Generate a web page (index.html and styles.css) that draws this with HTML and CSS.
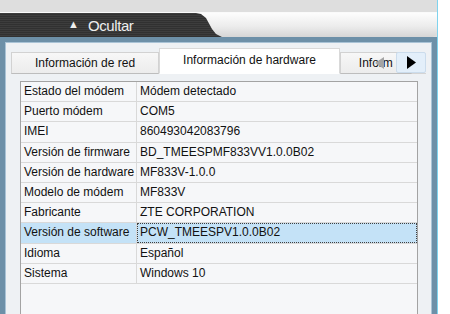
FILE: index.html
```html
<!DOCTYPE html>
<html lang="es">

<head>
    <meta charset="UTF-8">
    <meta name="viewport" content="width=device-width, initial-scale=1.0">
    <title>Información de hardware</title>
    <link rel="stylesheet" href="styles.css">
</head>

<body>
    <div class='app'>
        <div class='topbar'>
            <div class='bar'>
                <div class='hide-tab'>
                    <span class='arrow'>&#9650;</span>
                    <span class='hide-text'>Ocultar</span>
                </div>
            </div>
        </div>
        <div class='frame'>
            <div class='tabs'>
                <div class='tab'>Información de red</div>
                <div class='tab active'>Información de hardware</div>
                <div class='tab cut'>Inform
                    <svg class='scroll-left' width='9' height='12' viewBox='0 0 9 12'>
                        <path d='M9 0 L0 6 L9 12 Z' fill='#a4a4a4'/>
                    </svg>
                </div>
                <div class='scroll-right'>
                    <svg width='9' height='13' viewBox='0 0 9 13'>
                        <path d='M0 0 L9 6.5 L0 13 Z' fill='#000000'/>
                    </svg>
                </div>
            </div>
            <div class='page'>
                <div class='grid'>
                    <div class='row'><div class='key'>Estado del módem</div><div class='val'>Módem detectado</div></div>
                    <div class='row'><div class='key'>Puerto módem</div><div class='val'>COM5</div></div>
                    <div class='row'><div class='key'>IMEI</div><div class='val'>860493042083796</div></div>
                    <div class='row'><div class='key'>Versión de firmware</div><div class='val'>BD_TMEESPMF833VV1.0.0B02</div></div>
                    <div class='row'><div class='key'>Versión de hardware</div><div class='val'>MF833V-1.0.0</div></div>
                    <div class='row'><div class='key'>Modelo de módem</div><div class='val'>MF833V</div></div>
                    <div class='row'><div class='key'>Fabricante</div><div class='val'>ZTE CORPORATION</div></div>
                    <div class='row selected'><div class='key'>Versión de software</div><div class='val'>PCW_TMEESPV1.0.0B02</div></div>
                    <div class='row'><div class='key'>Idioma</div><div class='val'>Español</div></div>
                    <div class='row'><div class='key'>Sistema</div><div class='val'>Windows 10</div></div>
                </div>
            </div>
        </div>
    </div>
</body>

</html>
```

FILE: styles.css
```css
body {
    margin: 0px;
    background-color: #ffffff;
    font-family: "Liberation Sans", Arial, sans-serif;
    overflow: hidden;
}

.app {
    width: 437px;
    height: 314px;
    display: flex;
    flex-direction: column;
    border-right: 1px solid #7fd3ee;
}

.topbar {
    height: 37px;
    padding-top: 12px;
    box-sizing: border-box;
    background-color: #dedede;
}

.bar {
    height: 25px;
    border-top: 1px solid #fafafa;
    box-sizing: border-box;
    border-bottom-right-radius: 5px;
    background: linear-gradient(#fdfdfd, #ececec 55%, #d6d6d6);
}

.hide-tab {
    width: 222px;
    height: 24px;
    display: flex;
    align-items: center;
    clip-path: polygon(0 0, 196px 0, 201px 1px, 206px 5px, 212px 16px, 216px 21px, 222px 24px, 0 24px);
    background: repeating-linear-gradient(#3d3d3d 0px, #3d3d3d 1px, #313131 1px, #313131 2px);
    color: #eeeeee;
}

.arrow {
    font-size: 11px;
    margin-left: 68px;
    margin-top: -3px;
}

.hide-text {
    font-size: 15px;
    letter-spacing: -0.4px;
    margin-left: 9px;
    margin-top: 1px;
}

.frame {
    flex: 1;
    background-color: #eef1f4;
    border: 5px solid #6d90a8;
    border-bottom: none;
    box-shadow: inset 1px 1px 0px #a9c3d6, inset -1px 0px 0px #a9c3d6;
    padding: 6px 6px 0px 6px;
    display: flex;
    flex-direction: column;
}

.tabs {
    height: 25px;
    display: flex;
    align-items: flex-end;
    font-size: 12px;
    color: #111111;
    position: relative;
    border-bottom: 1px solid #d4d4d4;
}

.tab {
    height: 20px;
    line-height: 20px;
    padding: 0px 23px;
    background: linear-gradient(#f7f7f7, #ececec);
    border: 1px solid #d2d2d2;
    margin-bottom: -1px;
    border-bottom: 1px solid #bdbdbd;
}

.tab.active {
    height: 24px;
    line-height: 22px;
    background: #ffffff;
    border-color: #d9d9d9;
    border-bottom: 1px solid #ffffff;
}

.tab.cut {
    width: 52px;
    padding: 0px 0px 0px 18px;
    overflow: hidden;
    position: relative;
}

.scroll-left {
    position: absolute;
    left: 34px;
    top: 4px;
}

.scroll-right {
    position: absolute;
    right: 0px;
    bottom: 0px;
    width: 28px;
    height: 19px;
    display: flex;
    align-items: center;
    justify-content: center;
    background-color: #e3effa;
    border: 1px solid #cbdcec;
    border-radius: 2px;
}

.page {
    flex: 1;
    padding: 7px 8px 0px 9px;
    display: flex;
}

.grid {
    flex: 1;
    border: 1px solid #a3a3a3;
    border-bottom: none;
    background-color: #f6f7f9;
    font-size: 12px;
    color: #111111;
}

.row {
    display: flex;
    height: 20.2px;
    border-bottom: 1px solid #d9d9d9;
    box-sizing: border-box;
}

.key {
    width: 112px;
    padding-left: 3px;
    line-height: 19px;
    border-right: 1px solid #d9d9d9;
}

.val {
    flex: 1;
    padding-left: 3px;
    line-height: 19px;
}

.row.selected {
    background-color: #c4e2f7;
}

.row.selected .val {
    border: 1px dotted #404040;
    line-height: 17px;
    padding-left: 2px;
}
```
